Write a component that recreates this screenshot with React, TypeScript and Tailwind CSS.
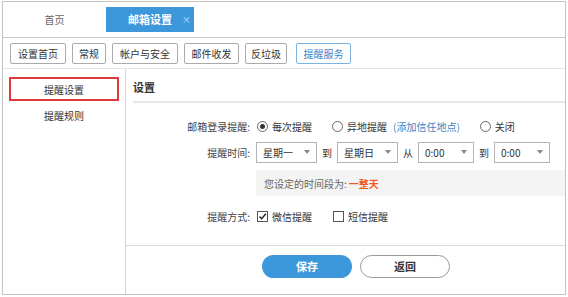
const font = { fontFamily: '"Microsoft YaHei", "Noto Sans CJK SC", "Liberation Sans", sans-serif' };

function Select({ value, width }: { value: string; width: string }) {
  return (
    <div
      className={`${width} h-[21px] border border-[#b4b4b4] bg-white flex items-center justify-between pl-[6px] pr-[6px] text-[#333]`}
    >
      <span>{value}</span>
      <span className="w-0 h-0 border-l-[3px] border-r-[3px] border-t-[4px] border-l-transparent border-r-transparent border-t-[#888]" />
    </div>
  );
}

function Radio({ checked }: { checked?: boolean }) {
  return (
    <span className="w-[11px] h-[11px] rounded-full border border-[#666] flex items-center justify-center bg-white">
      {checked && <span className="w-[5px] h-[5px] rounded-full bg-[#333]" />}
    </span>
  );
}

function Checkbox({ checked }: { checked?: boolean }) {
  return (
    <span className="w-[11px] h-[11px] border border-[#555] flex items-center justify-center bg-white">
      {checked && (
        <svg width="9" height="9" viewBox="0 0 9 9">
          <path d="M1.5 4.5 L3.7 6.8 L7.8 1.8" fill="none" stroke="#222" strokeWidth="1.4" />
        </svg>
      )}
    </span>
  );
}

export default function App() {
  const navButtons = [
    { label: "设置首页", w: "w-[56px]" },
    { label: "常规", w: "w-[34px]" },
    { label: "帐户与安全", w: "w-[66px]" },
    { label: "邮件收发", w: "w-[55px]" },
    { label: "反垃圾", w: "w-[42px]" },
  ];

  return (
    <div className="w-[568px] h-[297px] bg-white pl-[2px] pt-[1px]" style={font}>
      <div className="w-[564px] h-[294px] border border-[#c4c4c4] flex flex-col text-[10px] text-[#333]">
        {/* tabs */}
        <div className="h-[36px] border-b border-[#c8c8c8] flex items-start pt-[5px] shrink-0">
          <div className="w-[103px] h-[25px] flex items-center justify-center text-[#666]">首页</div>
          <div className="w-[88px] h-[25px] bg-[#3d97db] text-white flex items-center relative">
            <span className="font-bold text-[11px] ml-[22px]">邮箱设置</span>
            <span className="absolute right-[3px] top-[6px] text-[9px] text-[#cfe5f7]">×</span>
          </div>
        </div>

        {/* nav buttons */}
        <div className="h-[31px] border-b border-[#e4e4e4] flex items-center pl-[7px] gap-[6px] shrink-0">
          {navButtons.map((b) => (
            <div
              key={b.label}
              className={`${b.w} h-[21px] border border-[#aaa] rounded-[2px] flex items-center justify-center bg-white text-[#333]`}
            >
              {b.label}
            </div>
          ))}
          <div className="ml-[3px] w-[55px] h-[21px] border border-[#7ab3e0] rounded-[2px] flex items-center justify-center text-[#3a86c6]">
            提醒服务
          </div>
        </div>

        {/* body */}
        <div className="flex flex-1">
          <div className="w-[123px] border-r border-[#d4d4d4] pt-[8px] pl-[6px] shrink-0">
            <div className="w-[110px] h-[24px] border-2 border-[#e0383b] flex items-center justify-center">
              提醒设置
            </div>
            <div className="w-[110px] h-[24px] mt-[2px] flex items-center justify-center">提醒规则</div>
          </div>

          <div className="flex-1 flex flex-col">
            <div className="ml-[7px] h-[34px] border-b-2 border-[#e8e8e8] flex items-end pb-[6px] font-bold text-[11px]">
              设置
            </div>

            <div className="pt-[12px] flex flex-col">
              <div className="flex items-center h-[22px]">
                <div className="w-[124px] text-right text-[#444]">邮箱登录提醒:</div>
                <div className="ml-[7px] flex items-center gap-[4px]">
                  <Radio checked />
                  <span>每次提醒</span>
                </div>
                <div className="ml-[20px] flex items-center gap-[4px]">
                  <Radio />
                  <span>异地提醒</span>
                  <span className="text-[#3a86c6] ml-[2px]">(添加信任地点)</span>
                </div>
                <div className="ml-[20px] flex items-center gap-[4px]">
                  <Radio />
                  <span>关闭</span>
                </div>
              </div>

              <div className="flex items-center h-[22px] mt-[4px]">
                <div className="w-[124px] text-right text-[#444]">提醒时间:</div>
                <div className="ml-[6px] flex items-center gap-[5px]">
                  <Select value="星期一" width="w-[61px]" />
                  <span>到</span>
                  <Select value="星期日" width="w-[61px]" />
                  <span>从</span>
                  <Select value="0:00" width="w-[56px]" />
                  <span>到</span>
                  <Select value="0:00" width="w-[56px]" />
                </div>
              </div>

              <div className="ml-[130px] mt-[7px] h-[26px] bg-[#f4f4f4] flex items-center pl-[8px] text-[#666]">
                您设定的时间段为:
                <span className="text-[#f0561c] font-bold ml-[2px]">一整天</span>
              </div>

              <div className="flex items-center h-[22px] mt-[9px]">
                <div className="w-[124px] text-right text-[#444]">提醒方式:</div>
                <div className="ml-[7px] flex items-center gap-[4px]">
                  <Checkbox checked />
                  <span>微信提醒</span>
                </div>
                <div className="ml-[21px] flex items-center gap-[4px]">
                  <Checkbox />
                  <span>短信提醒</span>
                </div>
              </div>
            </div>

            <div className="mt-auto h-[49px] border-t border-[#dcdcdc] flex items-start pt-[9px] pl-[136px] gap-[8px]">
              <button className="w-[90px] h-[23px] rounded-full bg-[#3d97db] text-white font-bold text-[11px]">保存</button>
              <button className="w-[90px] h-[23px] rounded-full border border-[#999] bg-white font-bold text-[11px] text-[#333]">
                返回
              </button>
            </div>
          </div>
        </div>
      </div>
    </div>
  );
}
